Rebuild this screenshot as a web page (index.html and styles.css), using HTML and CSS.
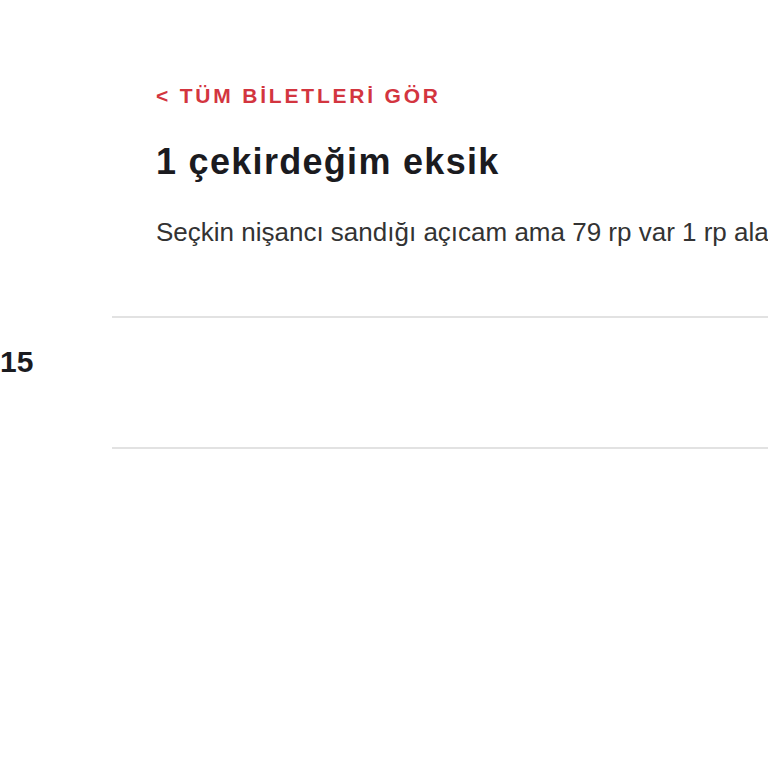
FILE: index.html
```html
<!DOCTYPE html>
<html lang="tr">
<head>
    <meta charset="UTF-8">
    <meta name="viewport" content="width=device-width, initial-scale=1.0">
    <title>1 çekirdeğim eksik</title>
    <link rel="stylesheet" href="styles.css">
</head>
<body>
    <div class="ticket">
        <div class="ticket-head">
            <a class="back-link" href="#">&lt; TÜM BİLETLERİ GÖR</a>
            <h1>1 çekirdeğim eksik</h1>
            <p class="ticket-text">Seçkin nişancı sandığı açıcam ama 79 rp var 1 rp alabilir miyim acaba</p>
        </div>

        <div class="reply">
            <div class="reply-date">15</div>
            <div class="reply-body"></div>
        </div>
    </div>
</body>
</html>
```

FILE: styles.css
```css
html, body {
    margin: 0;
    padding: 0;
    background: #fff;
    overflow: hidden;
}
body {
    font-family: "Liberation Sans", Arial, sans-serif;
    color: #1b1b1f;
}
.ticket {
    width: 768px;
}
.ticket-head {
    margin-left: 112px;
    padding: 81px 0 0 44px;
    height: 235px;
    border-bottom: 2px solid #e2e2e2;
    white-space: nowrap;
}
.back-link {
    display: block;
    color: #d3353f;
    font-size: 21px;
    font-weight: bold;
    letter-spacing: 2.8px;
    text-decoration: none;
    line-height: 30px;
}
h1 {
    margin: 29px 0 0;
    font-size: 36px;
    line-height: 44px;
    letter-spacing: 1.3px;
}
.ticket-text {
    margin: 30px 0 0;
    font-size: 26px;
    line-height: 36px;
    color: #333;
}
.reply {
    display: flex;
    height: 131px;
}
.reply-date {
    width: 112px;
    padding-top: 24px;
    font-size: 30px;
    font-weight: bold;
    line-height: 40px;
}
.reply-body {
    flex: 1;
    border-bottom: 2px solid #e2e2e2;
}
```
